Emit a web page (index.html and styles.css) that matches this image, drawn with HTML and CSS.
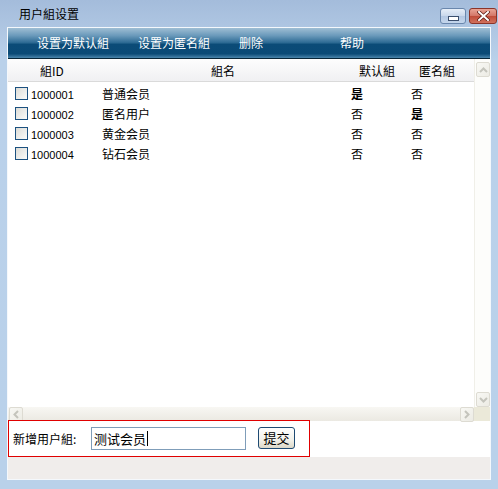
FILE: index.html
```html
<!DOCTYPE html>
<html lang="zh-CN">
<head>
  <meta charset="utf-8"/>
  <title>用户組设置</title>
  <link rel="stylesheet" href="styles.css">
</head>
<body>
  <div class="window">
    <div class="titlebar">
      <span class="title">用户組设置</span>
      <div class="caption-btns">
        <span class="cap-btn min">
          <svg width="11" height="5" viewBox="0 0 11 5"><rect x="0.5" y="0.5" width="10" height="4" fill="#fff" stroke="#3b4f6e"/></svg>
        </span>
        <span class="cap-btn close">
          <svg width="13" height="10" viewBox="0 0 13 10">
            <path d="M2 1 L11 9 M11 1 L2 9" stroke="#5a1810" stroke-width="3.4" stroke-linecap="square"/>
            <path d="M2 1 L11 9 M11 1 L2 9" stroke="#fff" stroke-width="2" stroke-linecap="square"/>
          </svg>
        </span>
      </div>
    </div>

    <div class="client">
      <div class="toolbar">
        <a class="tool">设置为默认組</a>
        <a class="tool">设置为匿名組</a>
        <a class="tool">删除</a>
        <a class="tool">帮助</a>
      </div>

      <div class="listbox">
        <div class="grid">
          <div class="row head">
            <div class="c1">組ID</div>
            <div class="c2">組名</div>
            <div class="c3">默认組</div>
            <div class="c4">匿名組</div>
          </div>
          <div class="row">
            <div class="c1"><span class="check"></span><span class="gid">1000001</span></div>
            <div class="c2">普通会员</div>
            <div class="c3"><b>是</b></div>
            <div class="c4">否</div>
          </div>
          <div class="row">
            <div class="c1"><span class="check"></span><span class="gid">1000002</span></div>
            <div class="c2">匿名用户</div>
            <div class="c3">否</div>
            <div class="c4"><b>是</b></div>
          </div>
          <div class="row">
            <div class="c1"><span class="check"></span><span class="gid">1000003</span></div>
            <div class="c2">黄金会员</div>
            <div class="c3">否</div>
            <div class="c4">否</div>
          </div>
          <div class="row">
            <div class="c1"><span class="check"></span><span class="gid">1000004</span></div>
            <div class="c2">钻石会员</div>
            <div class="c3">否</div>
            <div class="c4">否</div>
          </div>
        </div>

        <div class="vscroll">
          <span class="arrow">
            <svg width="9" height="6" viewBox="0 0 9 6"><path d="M1 5 L4.5 1.5 L8 5" fill="none" stroke="#c4c4bc" stroke-width="2"/></svg>
          </span>
          <span class="arrow">
            <svg width="9" height="6" viewBox="0 0 9 6"><path d="M1 1 L4.5 4.5 L8 1" fill="none" stroke="#c4c4bc" stroke-width="2"/></svg>
          </span>
        </div>
        <div class="hscroll">
          <span class="arrow">
            <svg width="6" height="9" viewBox="0 0 6 9"><path d="M5 1 L1.5 4.5 L5 8" fill="none" stroke="#c4c4bc" stroke-width="2"/></svg>
          </span>
          <span class="arrow">
            <svg width="6" height="9" viewBox="0 0 6 9"><path d="M1 1 L4.5 4.5 L1 8" fill="none" stroke="#c4c4bc" stroke-width="2"/></svg>
          </span>
        </div>
        <div class="corner"></div>
      </div>

      <form class="addform">
        <label class="addlabel">新增用户組:</label>
        <div class="field">测试会员<span class="caret"></span></div>
        <button type="button" class="submit">提交</button>
      </form>

      <div class="footer"></div>
    </div>
  </div>
</body>
</html>
```

FILE: styles.css
```css
body {
  margin: 0;
  background: #b9d1ea;
  font-family: "Noto Sans CJK SC", "DejaVu Sans", sans-serif;
  font-size: 12px;
  color: #000;
}
.window {
  width: 498px;
  height: 489px;
  padding: 0 7px 8px 7px;
  box-sizing: border-box;
  background: linear-gradient(#a4bcdb, #bad1ea 60px, #b9d1ea);
}

/* caption bar */
.titlebar {
  height: 27px;
  display: flex;
  align-items: flex-start;
}
.title {
  margin: 6px 0 0 12px;
  line-height: 16px;
}
.caption-btns {
  margin-left: auto;
  margin-right: -6px;
  margin-top: 8px;
  display: flex;
  gap: 3px;
}
.cap-btn {
  height: 16px;
  box-sizing: border-box;
  border-radius: 3px;
  display: flex;
  align-items: center;
  justify-content: center;
}
.cap-btn.min {
  width: 26px;
  border: 1px solid #6a87ad;
  background: linear-gradient(#e6eef8, #c9d8ec 50%, #b4c8e3 51%, #c4d6ec);
  padding-top: 4px;
}
.cap-btn.close {
  width: 28px;
  border: 1px solid #8b3429;
  background: linear-gradient(#e8a394, #d37566 50%, #c04b38 51%, #d0715d);
}

/* client area */
.client {
  border: 1px solid #f4f8fc;
  background: #fff;
  display: flex;
  flex-direction: column;
}
.toolbar {
  height: 30px;
  border-bottom: 1px solid #062538;
  padding-left: 29px;
  display: flex;
  align-items: center;
  background: linear-gradient(#9fbed4 0%, #6b9abb 25%, #2f6c95 48%, #0b4b77 55%, #0a4a76 86%, #4a86ad 100%);
}
.tool {
  width: 101px;
  color: #fff;
  cursor: pointer;
  padding-bottom: 2px;
}

.listbox {
  height: 362px;
  display: grid;
  grid-template-columns: 1fr 16px;
  grid-template-rows: 1fr 14px;
}
.grid {
  overflow: hidden;
}
.row {
  display: grid;
  grid-template-columns: 86px 249px 60px 60px;
  height: 20px;
  align-items: center;
}
.row.head {
  height: 23px;
  box-sizing: border-box;
  border-bottom: 1px solid #dadada;
  background: linear-gradient(#fdfdfd, #f0f0f2);
  margin-bottom: 1px;
}
.head .c1 { padding-left: 32px; }
.head .c2 { padding-left: 117px; }
.head .c3 { padding-left: 16px; }
.head .c4 { padding-left: 16px; }
.row .c1 {
  display: flex;
  align-items: center;
}
.row:not(.head) .c1 { padding-left: 7px; }
.row:not(.head) .c2,
.row:not(.head) .c3,
.row:not(.head) .c4 { padding-left: 8px; }
.check {
  width: 13px;
  height: 13px;
  box-sizing: border-box;
  border: 1px solid #1c5180;
  background: linear-gradient(135deg, #dcdcd7, #fbfbf9);
}
.gid {
  margin-left: 3px;
  padding-top: 4px;
  font-family: "Liberation Sans", sans-serif;
  font-size: 11px;
}

/* scroll bars */
.vscroll {
  padding: 3px 1px 0 1px;
  display: flex;
  flex-direction: column;
  justify-content: space-between;
  background: #fdfdfb;
  border-left: 1px solid #f0efe8;
}
.hscroll {
  display: flex;
  justify-content: space-between;
  padding-left: 1px;
  background: linear-gradient(#f8f7f3, #ebe9e2);
}
.corner {
  background: #ebe9d9;
}
.arrow {
  width: 14px;
  height: 15px;
  box-sizing: border-box;
  border: 1px solid #dddbd2;
  border-radius: 2px;
  background: linear-gradient(135deg, #f8f8f4, #ecebe4);
  display: flex;
  align-items: center;
  justify-content: center;
}
.hscroll .arrow {
  height: 15px;
}

/* add group form */
.addform {
  margin: -1px 0 0 0;
  width: 302px;
  height: 37px;
  box-sizing: border-box;
  border: 1px solid #e00000;
  background: #fff;
  display: flex;
  align-items: center;
  position: relative;
}
.addlabel {
  margin-left: 4px;
  width: 78px;
}
.field {
  width: 155px;
  height: 23px;
  box-sizing: border-box;
  border: 1px solid #7f9db9;
  padding-left: 2px;
  font-size: 13px;
  line-height: 20px;
  display: flex;
  align-items: center;
}
.caret {
  width: 1px;
  height: 15px;
  background: #000;
  margin-left: 1px;
}
.submit {
  margin-left: 12px;
  width: 37px;
  height: 22px;
  padding: 0;
  border: 1px solid #1e4a73;
  border-radius: 3px;
  background: linear-gradient(#ffffff, #f2f1ea 60%, #dcd8c8);
  font-family: inherit;
  font-size: 13px;
  margin-top: -2px;
}
.footer {
  height: 22px;
  background: #f0edeb;
}
```
